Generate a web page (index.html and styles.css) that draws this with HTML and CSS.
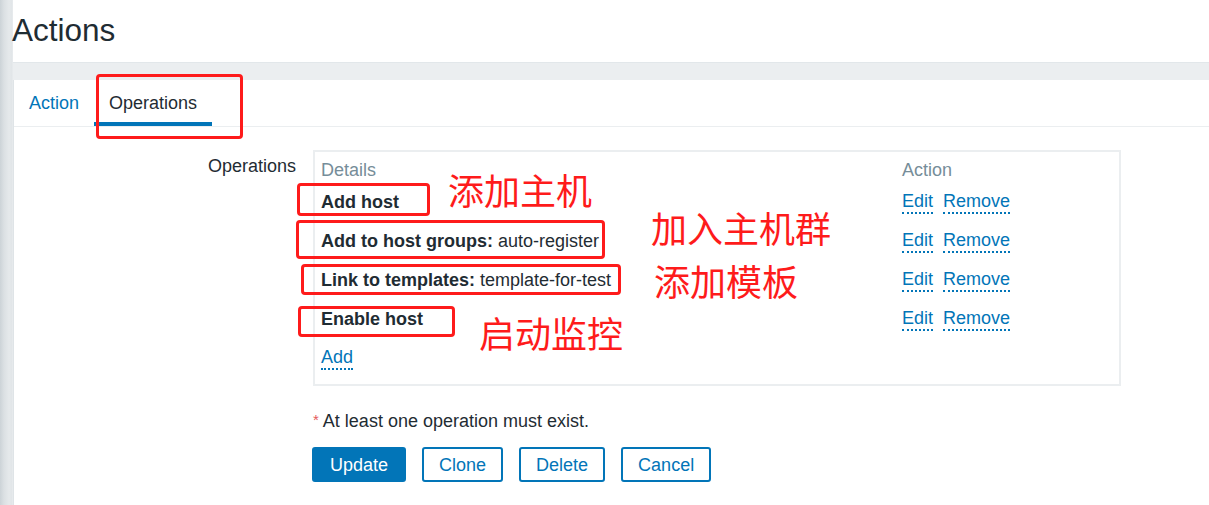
FILE: index.html
```html
<!DOCTYPE html>
<html lang="en">
<head>
<meta charset="utf-8">
<title>Actions</title>
<link rel="stylesheet" href="styles.css">
</head>
<body>
<div class="page">
  <div class="edge"></div>
  <div class="main">
    <header class="header">
      <h1 class="title">Actions</h1>
    </header>
    <div class="content">
      <div class="panel">
        <nav class="tabs">
          <a class="tab">Action</a>
          <a class="tab tab-active">Operations</a>
        </nav>
        <div class="form">
          <div class="form-row">
            <div class="label">Operations</div>
            <div class="field">
              <div class="ops-table">
                <div class="th">Details</div>
                <div class="th">Action</div>

                <div class="td"><b>Add host</b></div>
                <div class="td"><a class="link edit">Edit</a><a class="link">Remove</a></div>

                <div class="td"><b>Add to host groups:</b>&nbsp;auto-register</div>
                <div class="td"><a class="link edit">Edit</a><a class="link">Remove</a></div>

                <div class="td"><b>Link to templates:</b>&nbsp;template-for-test</div>
                <div class="td"><a class="link edit">Edit</a><a class="link">Remove</a></div>

                <div class="td"><b>Enable host</b></div>
                <div class="td"><a class="link edit">Edit</a><a class="link">Remove</a></div>

                <div class="td"><a class="link">Add</a></div>
                <div class="td"></div>
              </div>
            </div>
          </div>
          <div class="form-row note-row">
            <div class="label"></div>
            <div class="field note"><span class="req">*</span> At least one operation must exist.</div>
          </div>
          <div class="form-row buttons-row">
            <div class="label"></div>
            <div class="field buttons">
              <button class="btn btn-primary">Update</button>
              <button class="btn">Clone</button>
              <button class="btn">Delete</button>
              <button class="btn">Cancel</button>
            </div>
          </div>
        </div>
      </div>
    </div>
  </div>

  <div class="mark mark-tab"></div>
  <div class="mark mark-1"></div>
  <div class="mark mark-2"></div>
  <div class="mark mark-3"></div>
  <div class="mark mark-4"></div>
  <div class="note-cn cn-1">添加主机</div>
  <div class="note-cn cn-2">加入主机群</div>
  <div class="note-cn cn-3">添加模板</div>
  <div class="note-cn cn-4">启动监控</div>
</div>
</body>
</html>
```

FILE: styles.css
```css
html, body {
  margin: 0;
  padding: 0;
  background: #ffffff;
}

body {
  font-family: "Liberation Sans", Arial, sans-serif;
  font-size: 18px;
  color: #1f2c33;
}

.page {
  position: relative;
  display: flex;
  width: 1209px;
  height: 505px;
  overflow: hidden;
}

.edge {
  width: 13px;
  flex: 0 0 13px;
  background: linear-gradient(to right, #ccd3d7 0px, #dbe0e3 4px, #e5e9eb 9px, #e1e5e8 12px, #ebeef0 13px);
}

.main {
  flex: 1;
  display: flex;
  flex-direction: column;
  min-width: 0;
}

.header {
  height: 62px;
  box-sizing: border-box;
  padding-top: 11px;
  background: #ffffff;
}

.title {
  margin: 0 0 0 -1px;
  font-size: 31.5px;
  line-height: 38px;
  font-weight: normal;
  color: #1f2c33;
}

.content {
  flex: 1;
  background: #ebeef0;
  border-top: 1px solid #e2e7ea;
  padding-top: 17px;
}

.panel {
  background: #ffffff;
  border-left: 1px solid #dfe4e7;
  height: 100%;
}

.tabs {
  display: flex;
  height: 46px;
  border-bottom: 1px solid #ebeef0;
}

.tab {
  display: flex;
  align-items: center;
  padding: 0 15px;
  height: 46px;
  box-sizing: border-box;
  color: #0275b8;
  line-height: 22px;
}

.tab-active {
  color: #1f2c33;
  border-bottom: 4px solid #0275b8;
  padding-top: 4px;
}

.form {
  padding-top: 23px;
}

.form-row {
  display: flex;
  gap: 17px;
}

.label {
  width: 282px;
  flex: 0 0 282px;
  text-align: right;
  line-height: 22px;
  padding-top: 5px;
}

.field {
  width: 808px;
  flex: 0 0 808px;
}

.ops-table {
  display: grid;
  grid-template-columns: 1fr 217px;
  border: 2px solid #ebeef0;
  padding: 0 0 7px 6px;
  line-height: 22px;
}

.th {
  color: #768d99;
  padding-top: 7px;
  height: 30px;
  box-sizing: border-box;
}

.td {
  height: 39px;
  display: flex;
  align-items: center;
  white-space: nowrap;
}

.td b {
  font-weight: bold;
}

.link {
  color: #0275b8;
  border-bottom: 2px dotted #0275b8;
  line-height: 22px;
}

.edit {
  margin-right: 10px;
}

.note-row {
  margin-top: 23px;
}

.note {
  line-height: 22px;
}

.req {
  color: #e45959;
  font-size: 15px;
  vertical-align: 2px;
}

.buttons-row {
  margin-top: 15px;
}

.buttons {
  display: flex;
  gap: 16px;
  margin-left: -1px;
}

.btn {
  font-family: "Liberation Sans", Arial, sans-serif;
  font-size: 18px;
  height: 35px;
  padding: 0 15px;
  background: #ffffff;
  color: #0275b8;
  border: 2px solid #0275b8;
  border-radius: 3px;
  line-height: 22px;
}

.btn-primary {
  background: #0275b8;
  color: #ffffff;
  padding: 0 16px;
}

/* annotations layered over the screenshot */
.mark {
  position: absolute;
  border: 3px solid #fe1b1b;
  border-radius: 4px;
  box-sizing: border-box;
}

.mark-tab { left: 96px; top: 74px; width: 147px; height: 65px; }
.mark-1 { left: 297px; top: 183px; width: 133px; height: 33px; }
.mark-2 { left: 296px; top: 220px; width: 309px; height: 39px; }
.mark-3 { left: 301px; top: 264px; width: 320px; height: 31px; }
.mark-4 { left: 298px; top: 306px; width: 157px; height: 31px; }

.note-cn {
  position: absolute;
  font-family: "Noto Sans CJK SC", sans-serif;
  font-size: 36px;
  line-height: 36px;
  color: #fe1b1b;
  white-space: nowrap;
}

.cn-1 { left: 448px; top: 171px; }
.cn-2 { left: 651px; top: 209px; }
.cn-3 { left: 654px; top: 262px; }
.cn-4 { left: 479px; top: 314px; }
```
